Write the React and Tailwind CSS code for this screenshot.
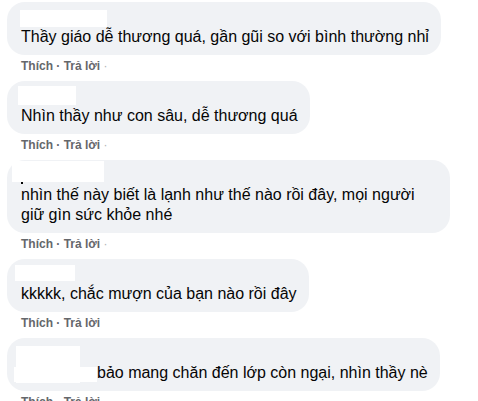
import React from "react";

const comments = [
  {
    text: "Thầy giáo dễ thương quá, gần gũi so với bình thường nhỉ",
    mask: [{ l: 13, t: 8, w: 87, h: 17 }],
    trail: true,
  },
  {
    text: "Nhìn thầy như con sâu, dễ thương quá",
    mask: [{ l: 11, t: 5, w: 58, h: 19 }],
    trail: true,
  },
  {
    text: "nhìn thế này biết là lạnh như thế nào rồi đây, mọi người giữ gìn sức khỏe nhé",
    mask: [{ l: 5, t: 1, w: 92, h: 21 }],
    dot: true,
    wide: true,
    trail: true,
  },
  {
    text: "kkkkk, chắc mượn của bạn nào rồi đây",
    mask: [{ l: 8, t: 6, w: 60, h: 16 }],
    trail: false,
  },
  {
    text: "bảo mang chăn đến lớp còn ngại, nhìn thầy nè",
    mask: [
      { l: 9, t: 8, w: 64, h: 37 },
      { l: 7, t: 29, w: 83, h: 15 },
    ],
    indent: true,
    trail: false,
  },
];

function Comment({ c }) {
  return (
    <div className="flex flex-col items-start mb-[7px]">
      <div
        className={`relative bg-[#f0f2f5] rounded-[18px] pl-[14px] pr-[12px] pt-[8px] pb-[8px] ${
          c.wide ? "w-[443px]" : "w-fit"
        }`}
      >
        <div className="h-[17px]"></div>
        <p className="text-[16px] leading-[20px] text-[#050505]">
          {c.indent ? <span className="inline-block w-[76px]"></span> : null}
          {c.text}
        </p>
        {c.mask.map((m, i) => (
          <div
            key={i}
            className="absolute bg-white"
            style={{ left: m.l, top: m.t, width: m.w, height: m.h }}
          ></div>
        ))}
        {c.dot ? (
          <div className="absolute left-[14px] top-[22px] w-[2px] h-[2px] bg-[#050505]"></div>
        ) : null}
      </div>
      <div className="mt-[3px] pl-[14px] h-[16px] text-[12px] leading-[16px] font-bold text-[#65676b]">
        Thích · Trả lời
        {c.trail ? <span className="font-normal text-[#b0b3b8]"> ·</span> : null}
      </div>
    </div>
  );
}

export default function App() {
  return (
    <div
      className="w-[478px] h-[401px] overflow-hidden bg-white pl-[7px] pt-[2px]"
      style={{ fontFamily: '"Liberation Sans", Arial, sans-serif' }}
    >
      {comments.map((c, i) => (
        <Comment key={i} c={c} />
      ))}
    </div>
  );
}
